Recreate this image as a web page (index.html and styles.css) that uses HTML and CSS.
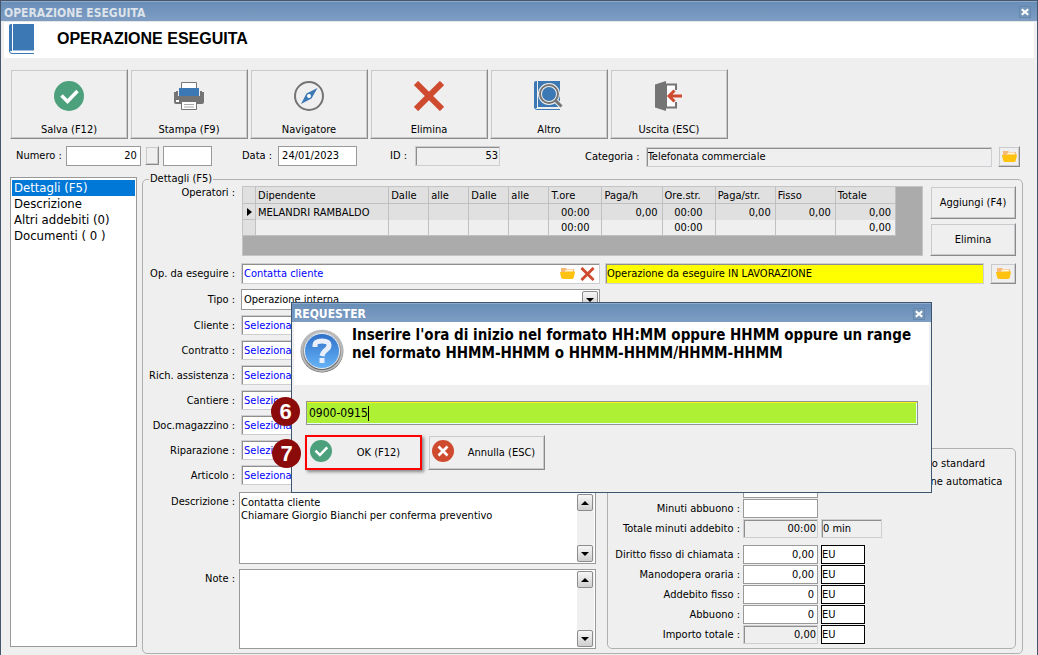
FILE: index.html
```html
<!DOCTYPE html>
<html lang="it">
<head>
<meta charset="utf-8">
<title>Operazione eseguita</title>
<link rel="stylesheet" href="styles.css">
</head>
<body>
<svg class="defs" aria-hidden="true">
  <defs>
    <linearGradient id="ring" x1="0" y1="0" x2="0" y2="1"><stop offset="0" stop-color="#d8d8d8"/><stop offset="1" stop-color="#5c5c5c"/></linearGradient>
    <linearGradient id="ball" x1="0" y1="0" x2="0" y2="1"><stop offset="0" stop-color="#2f70c8"/><stop offset="1" stop-color="#67b4f8"/></linearGradient>
  </defs>
  <symbol id="i-book" viewBox="0 0 26 30"><path fill="#3c78b4" d="M3 0h22v26H4V0zM2 0h1v27H0V2q0-2 2-2z"/><path fill="none" stroke="#3c78b4" d="M.5 2v25q0 2.500 2.500 2.500h22"/><path stroke="#9fbfdf" d="M4 26.500h21"/></symbol>
  <symbol id="i-ok" viewBox="0 0 30 30"><circle cx="15" cy="15" r="15" fill="#4ca07c"/><path fill="none" stroke="#fff" stroke-width="3.500" d="M7.500 14.500l6 6L23.500 10"/></symbol>
  <symbol id="i-print" viewBox="0 0 30 28"><path fill="#747474" d="M0 10h3v3h24v-3h3v10q0 2-2 2H2q-2 0-2-2zM2 9h26v6H2z"/><path fill="#efefef" d="M4 6h22v8H4z"/><path fill="#fff" stroke="#777" d="M7.500.5h15V7h-15z"/><path fill="#3c78b4" d="M5 6h20v8H5z"/><path fill="#fff" d="M2 18h3v2H2z"/><path fill="#fff" stroke="#747474" d="M7.500 19.500h15v8h-15z"/><path stroke="#aaa" d="M10 22.500h10M10 25h10"/></symbol>
  <symbol id="i-nav" viewBox="0 0 30 30"><circle cx="15" cy="15" r="14" fill="none" stroke="#747474" stroke-width="2"/><path fill="#3c78b4" d="M23.500 7l-6 10.500L7 23l5.500-10.500z"/><circle cx="15" cy="15" r="2" fill="#fff"/></symbol>
  <symbol id="i-x" viewBox="0 0 30 30"><path fill="none" stroke="#cf4b30" stroke-width="6" d="M2 2l26 26M28 2L2 28"/></symbol>
  <symbol id="i-find" viewBox="0 0 30 30"><path fill="#3c78b4" d="M4 0h22v26H4zM2 0h1v27H0V2q0-2 2-2z"/><path fill="none" stroke="#3c78b4" d="M.5 2v24q0 2.500 2.500 2.500h23"/><path stroke="#efefef" stroke-width="5" d="M20 18l8 8"/><circle cx="15" cy="13" r="9" fill="#3c78b4" stroke="#efefef" stroke-width="4"/><circle cx="15" cy="13" r="9" fill="none" stroke="#747474" stroke-width="2"/><path stroke="#747474" stroke-width="3" d="M21.500 19.500l6 6"/></symbol>
  <symbol id="i-exit" viewBox="0 0 28 30"><path fill="#fff" stroke="#747474" stroke-width="2" d="M11 3.500h10v23H11z"/><path fill="#747474" d="M0 3.500L11 0v30L0 26.500z"/><path fill="#efefef" d="M19 9h4v12h-4z"/><path fill="none" stroke="#cf4b30" stroke-width="3" d="M14 15h13M19.500 9.500L14 15l5.500 5.500"/></symbol>
  <symbol id="i-folder" viewBox="0 0 15 11"><path fill="#f7b978" d="M1 0h5l1 1h7v5H1z"/><path fill="#fff3d8" d="M6 1.500h7V4H5z"/><path fill="#ffc20e" d="M0 4h5l1-.5h9l-1 5.500q-.4 2-2 2H3q-1.600 0-2-2z"/></symbol>
  <symbol id="i-cancel" viewBox="0 0 22 22"><circle cx="11" cy="11" r="11" fill="#cf4b30"/><path stroke="#fff" stroke-width="2.600" d="M6.500 6.500l9 9M15.500 6.500l-9 9"/></symbol>
  <symbol id="i-close" viewBox="0 0 10 10"><path stroke="#fff" stroke-width="2.600" d="M1 1.500l8 7M9 1.500l-8 7"/></symbol>
  <symbol id="i-up" viewBox="0 0 8 4"><path d="M0 4l4-4 4 4z"/></symbol>
  <symbol id="i-down" viewBox="0 0 8 4"><path d="M0 0l4 4 4-4z"/></symbol>
</svg>

<main class="window">
  <div class="titlebar"><span>OPERAZIONE ESEGUITA</span><button class="close" type="button" aria-label="Chiudi finestra"><svg><use href="#i-close"/></svg></button></div>
  <header class="heading"><svg class="book"><use href="#i-book"/></svg><h1>OPERAZIONE ESEGUITA</h1></header>

  <nav class="toolbar">
    <button class="btn tool" type="button"><svg><use href="#i-ok"/></svg>Salva (F12)</button>
    <button class="btn tool" type="button"><svg><use href="#i-print"/></svg>Stampa (F9)</button>
    <button class="btn tool" type="button"><svg><use href="#i-nav"/></svg>Navigatore</button>
    <button class="btn tool" type="button"><svg><use href="#i-x"/></svg>Elimina</button>
    <button class="btn tool" type="button"><svg><use href="#i-find"/></svg>Altro</button>
    <button class="btn tool" type="button"><svg><use href="#i-exit"/></svg>Uscita (ESC)</button>
  </nav>

  <div class="keys">
    <div class="key key-number"><label for="numero">Numero :</label><input class="box num" id="numero" value="20"><button class="btn mini" type="button" aria-label="Cerca numero"></button><input class="box suffix" aria-label="Suffisso numero"></div>
    <div class="key key-date"><label for="data">Data :</label><input class="box date" id="data" value="24/01/2023"></div>
    <div class="key key-id"><label for="ident">ID :</label><input class="box sunken num" id="ident" value="53" readonly></div>
    <div class="key key-category"><label for="categoria">Categoria :</label><input class="box sunken" id="categoria" value="Telefonata commerciale" readonly><button class="btn folder" type="button" aria-label="Scegli categoria"><svg><use href="#i-folder"/></svg></button></div>
  </div>

  <div class="content">
    <ul class="sections">
      <li><a class="current" href="#dettagli">Dettagli (F5)</a></li>
      <li><a href="#descrizione">Descrizione</a></li>
      <li><a href="#addebiti">Altri addebiti (0)</a></li>
      <li><a href="#documenti">Documenti ( 0 )</a></li>
    </ul>

    <fieldset class="details" id="dettagli">
      <legend>Dettagli (F5)</legend>
      <div class="operators">
        <span class="label">Operatori :</span>
        <div class="grid-area">
          <table class="grid">
            <colgroup><col class="c-mark"><col class="c-name"><col class="c-time"><col class="c-time"><col class="c-time"><col class="c-time"><col class="c-mid"><col class="c-wide"><col class="c-mid"><col class="c-wide"><col class="c-wide"><col class="c-wide"></colgroup>
            <thead><tr><th></th><th>Dipendente</th><th>Dalle</th><th>alle</th><th>Dalle</th><th>alle</th><th>T.ore</th><th>Paga/h</th><th>Ore.str.</th><th>Paga/str.</th><th>Fisso</th><th>Totale</th></tr></thead>
            <tbody>
              <tr class="active"><th><span class="marker"></span></th><td class="name">MELANDRI RAMBALDO</td><td></td><td></td><td></td><td></td><td class="hours">00:00</td><td>0,00</td><td class="hours">00:00</td><td>0,00</td><td>0,00</td><td>0,00</td></tr>
              <tr><th></th><td></td><td></td><td></td><td></td><td></td><td class="hours">00:00</td><td></td><td class="hours">00:00</td><td></td><td></td><td>0,00</td></tr>
            </tbody>
          </table>
        </div>
        <div class="side">
          <button class="btn" type="button">Aggiungi (F4)</button>
          <button class="btn" type="button">Elimina</button>
        </div>
      </div>

      <div class="columns">
        <div class="form">
          <div class="row tall"><label for="op">Op. da eseguire :</label><div class="box sunken white lookup"><input id="op" value="Contatta cliente"><button type="button" aria-label="Apri operazione"><svg><use href="#i-folder"/></svg></button><button type="button" aria-label="Togli operazione"><svg class="remove"><use href="#i-x"/></svg></button></div></div>
          <div class="row tall"><label for="tipo">Tipo :</label><div class="box combo"><select id="tipo"><option>Operazione interna</option></select><span class="arrow"><svg><use href="#i-down"/></svg></span></div></div>
          <div class="row"><label for="cliente">Cliente :</label><input class="box sunken white link" id="cliente" value="Seleziona..."></div>
          <div class="row"><label for="contratto">Contratto :</label><input class="box sunken white link" id="contratto" value="Seleziona..."></div>
          <div class="row"><label for="rich">Rich. assistenza :</label><input class="box sunken white link" id="rich" value="Seleziona..."></div>
          <div class="row"><label for="cantiere">Cantiere :</label><input class="box sunken white link" id="cantiere" value="Seleziona..."></div>
          <div class="row"><label for="docmag">Doc.magazzino :</label><input class="box sunken white link" id="docmag" value="Seleziona..."></div>
          <div class="row"><label for="ripar">Riparazione :</label><input class="box sunken white link" id="ripar" value="Seleziona..."></div>
          <div class="row"><label for="articolo">Articolo :</label><input class="box sunken white link" id="articolo" value="Seleziona..."></div>
          <div class="row memo first"><label for="descrizione">Descrizione :</label><div class="box memo-box"><textarea id="descrizione">Contatta cliente
Chiamare Giorgio Bianchi per conferma preventivo</textarea><div class="scroll"><button class="arrow" type="button" aria-label="Descrizione su"><svg><use href="#i-up"/></svg></button><button class="arrow" type="button" aria-label="Descrizione giù"><svg><use href="#i-down"/></svg></button></div></div></div>
          <div class="row memo notes"><label for="note">Note :</label><div class="box memo-box"><textarea id="note"></textarea><div class="scroll"><button class="arrow" type="button" aria-label="Note su"><svg><use href="#i-up"/></svg></button><button class="arrow" type="button" aria-label="Note giù"><svg><use href="#i-down"/></svg></button></div></div></div>
        </div>

        <div class="right">
          <div class="status"><input class="box sunken working" aria-label="Stato operazione" value="Operazione da eseguire IN LAVORAZIONE" readonly><button class="btn folder" type="button" aria-label="Scegli stato"><svg><use href="#i-folder"/></svg></button></div>
          <section class="totals">
            <div class="amounts">
              <label for="minuti">Minuti :</label><input class="box num" id="minuti"><span></span>
              <label for="abbmin">Minuti abbuono :</label><input class="box num" id="abbmin"><span></span>
              <label for="totmin">Totale minuti addebito :</label><input class="box sunken num" id="totmin" value="00:00" readonly><input class="box sunken" aria-label="Minuti" value="0 min" readonly>
              <div class="break"></div>
              <label for="diritto">Diritto fisso di chiamata :</label><input class="box num" id="diritto" value="0,00"><input class="box unit" aria-label="Valuta diritto" value="EU">
              <label for="mano">Manodopera oraria :</label><input class="box num" id="mano" value="0,00"><input class="box unit" aria-label="Valuta manodopera" value="EU">
              <label for="addeb">Addebito fisso :</label><input class="box num" id="addeb" value="0"><input class="box unit" aria-label="Valuta addebito" value="EU">
              <label for="abbuono">Abbuono :</label><input class="box num" id="abbuono" value="0"><input class="box unit" aria-label="Valuta abbuono" value="EU">
              <label for="importo">Importo totale :</label><input class="box sunken num" id="importo" value="0,00" readonly><input class="box unit" aria-label="Valuta importo" value="EU">
            </div>
            <div class="checks">
              <label><input type="checkbox">Importo standard</label>
              <label><input type="checkbox">Gestione automatica</label>
            </div>
          </section>
        </div>
      </div>
    </fieldset>
  </div>
</main>

<div class="dialog" role="dialog" aria-labelledby="dlg-title">
  <div class="titlebar"><span id="dlg-title">REQUESTER</span><button class="close" type="button" aria-label="Chiudi richiesta"><svg><use href="#i-close"/></svg></button></div>
  <div class="question">
    <svg viewBox="0 0 44 44"><circle cx="22" cy="22" r="21.500" fill="url(#ring)"/><circle cx="22" cy="22" r="20" fill="none" stroke="#b8b8b8" stroke-width="2"/><circle cx="22" cy="22" r="17.500" fill="url(#ball)" stroke="#e8eef6"/><path fill="none" stroke="#eaf0fb" stroke-width="5" d="M15 18v-2q0-4 7-4t7 4q0 3-3 5t-4 6"/><path fill="#eaf0fb" d="M19.500 29h5v5h-5z"/></svg>
    <label for="ora">Inserire l'ora di inizio nel formato HH:MM oppure HHMM oppure un range nel formato HHMM-HHMM o HHMM-HHMM/HHMM-HHMM</label>
  </div>
  <div class="answer">
    <div class="entry"><input id="ora" value="0900-0915"><span class="caret"></span></div>
    <div class="actions">
      <button class="btn action marked" type="button"><svg><use href="#i-ok"/></svg><span>OK (F12)</span></button>
      <button class="btn action" type="button"><svg><use href="#i-cancel"/></svg><span>Annulla (ESC)</span></button>
    </div>
  </div>
  <span class="badge badge-input">6</span>
  <span class="badge badge-ok">7</span>
</div>
</body>
</html>
```
FILE: styles.css
```css
* { box-sizing: border-box; }
body, input, select, textarea, button {
  margin: 0;
  font: 11px/13px "DejaVu Sans Condensed", "DejaVu Sans", sans-serif;
  color: #000;
}
body { background: #efefef; }
input, select, textarea { min-width: 0; padding: 0; border: 0; background: transparent; outline: none; }
button { padding: 0; border: 0; background: transparent; }
svg { display: block; flex: none; }
.defs { position: absolute; width: 0; height: 0; }
label, .label { white-space: nowrap; }

.window {
  display: flex;
  flex-direction: column;
  min-height: 100vh;
  background: #efefef;
  border: 1px solid #46566c;
  border-bottom: 0;
}
.titlebar {
  display: flex;
  align-items: center;
  justify-content: space-between;
  height: 20px;
  padding: 3px 6px 0 3px;
  background: linear-gradient(#688eb8, #7e9dc3);
  border-top: 1px solid #8fabc9;
  color: #dde3ea;
  font-size: 12px;
  font-weight: bold;
}
.close { display: flex; align-items: center; justify-content: center; width: 12px; height: 12px; margin-bottom: 2px; background: #7797ba; border: 1px solid #6487ae; }
.close svg { width: 8px; height: 8px; }
.heading { display: flex; align-items: center; gap: 22px; height: 37px; margin: 0 3px; padding: 0 5px 3px; background: #fff; border-top: 1px solid #e6e6e6; }
.heading .book { width: 26px; height: 30px; }
h1 { margin: 0; font: bold 16px/18px "Liberation Sans", Arial, sans-serif; }

.btn { border: 1px solid #efefef; border-right-color: #8a8a8a; border-bottom-color: #8a8a8a; box-shadow: inset 0 0 0 1px #cacace; background: #efefef; }
.toolbar { display: flex; gap: 2px; padding: 11px 9px 0; }
.tool { display: flex; flex-direction: column; align-items: center; justify-content: space-between; width: 118px; height: 70px; padding: 11px 1px 2px; }
.tool svg { width: 30px; height: 30px; }

.box { height: 20px; border: 1px solid #999; background: #fff; padding: 0 3px; }
.sunken { background: #efefef; border: 1px solid #cdcdd2; box-shadow: inset 1px 1px #8e8e8e; padding: 0 1px; }
.white { background: #fff; padding: 0 2px; }
.num { text-align: right; }
.link, .lookup input { color: #00f; }
.keys { display: flex; align-items: flex-start; padding: 6px 17px 0 15px; }
.key { display: flex; align-items: center; gap: 6px; height: 21px; }
.key-number { width: 226px; gap: 4px; }
.key-number .num { width: 75px; }
.mini { width: 14px; height: 19px; }
.suffix { width: 49px; }
.key-date { width: 148px; }
.date { width: 79px; }
.key-id { width: 195px; gap: 8px; }
.key-id input { width: 85px; }
.key-category { flex: 1; padding-top: 2px; }
.key-category input { flex: 1; }
.folder { display: flex; align-items: center; justify-content: center; width: 22px; height: 21px; }
.folder svg { width: 15px; height: 11px; }

.content { display: flex; flex: 1; gap: 5px; padding: 6px 14px 1px 9px; }
.sections { flex: none; width: 127px; margin: 5px 0 7px; padding: 2px 1px; border: 1px solid #999; background: #fff; list-style: none; font-size: 13px; line-height: 16px; }
.sections a { display: block; padding: 0 2px; color: #000; text-decoration: none; white-space: nowrap; }
.sections .current { background: #0078d7; color: #fff; }

.details { flex: 1; min-width: 0; margin: 0; padding: 0 6px 3px 5px; border: 1px solid #b0b0b0; border-radius: 5px; }
.details legend { margin-left: 1px; padding: 0 1px; line-height: 14px; }
.operators { display: flex; gap: 7px; height: 70px; }
.label, .form label { flex: none; width: 87px; text-align: right; }
.grid-area { flex: 1; min-width: 0; border: 1px solid #c4c4c4; background: #ababab; overflow: hidden; }
.side { display: flex; flex-direction: column; gap: 4px; width: 86px; }
.side .btn { height: 33px; }
.grid { border-collapse: separate; border-spacing: 0; table-layout: fixed; width: 653px; }
.grid th, .grid td { height: 16px; padding: 1px 4px 0 2px; border-right: 1px solid #c0c0c0; background: #efefef; font-weight: normal; line-height: 14px; text-align: right; white-space: nowrap; }
.grid thead th { height: 17px; }
.grid thead th, .grid tbody th { text-align: left; border-bottom: 1px solid #c0c0c0; background: #e0e0e0; }
.grid .active td { background: #e0e0e0; }
.grid .active .name { text-align: left; }
.grid .hours { padding-right: 12px; }
.grid tbody tr:last-child td { border-bottom: 1px solid #c0c0c0; }
.marker { display: block; margin-left: 2px; width: 0; border: 4px solid transparent; border-left: 5px solid #000; border-right: 0; }
.c-mark { width: 13px; } .c-name { width: 133px; } .c-time { width: 40px; } .c-mid { width: 53px; } .c-wide { width: 60px; }

.columns { display: grid; grid-template-columns: minmax(0, 452fr) minmax(0, 411fr); gap: 5px; padding-top: 7px; }
.form { display: flex; flex-direction: column; gap: 5px; }
.row { display: flex; align-items: center; gap: 6px; height: 20px; }
.row > .box { flex: 1; }
.tall { height: 21px; }
.tall .box { height: 21px; }
.lookup, .combo { display: flex; align-items: center; }
.lookup { gap: 5px; padding-right: 4px; }
.lookup input, .combo select { flex: 1; }
.lookup button svg { width: 15px; height: 11px; }
.lookup button .remove { width: 15px; height: 14px; }
.combo { padding: 0 1px 0 2px; }
.combo select { appearance: none; }
.arrow { display: flex; align-items: center; justify-content: center; width: 16px; height: 17px; border: 1px solid #8c8c8c; border-radius: 2px; background: linear-gradient(#f6f6f6, #cfcfcf); }
.arrow svg { width: 8px; height: 4px; }
.memo { align-items: flex-start; height: 72px; gap: 4px; padding-right: 4px; }
.memo label { padding-top: 3px; }
.first { margin-top: 2px; }
.notes { height: 80px; }
.memo-box { display: flex; height: 100%; padding: 1px; }
.memo-box textarea { flex: 1; resize: none; padding: 2px 0; overflow: hidden; white-space: pre; }
.scroll { display: flex; flex-direction: column; justify-content: space-between; width: 17px; background: #efefef; }

.right { display: flex; flex-direction: column; justify-content: space-between; }
.status { display: flex; gap: 6px; height: 21px; }
.status input { flex: 1; height: 21px; background: #ff0; }
.status .folder { width: 26px; }
.totals { display: flex; justify-content: space-between; height: 201px; margin: 0 0 0 2px; padding: 6px 4px 4px; border: 1px solid #b0b0b0; border-radius: 5px; }
.amounts { display: grid; grid-template-columns: 128px 75px 61px; align-content: end; align-items: center; gap: 1px 3px; }
.amounts label { text-align: right; }
.amounts .box { width: 100%; height: 19px; }
.amounts .unit { width: 44px; border-color: #000; padding: 0; }
.break { grid-column: 1 / -1; height: 5px; }
.checks { display: flex; flex-direction: column; gap: 4px; padding: 1px 14px 0 0; }
.checks label { display: flex; align-items: center; gap: 4px; height: 14px; }
.checks input { width: 13px; height: 13px; margin: 0; }

.dialog { position: absolute; left: 291px; top: 302px; width: 641px; background: #efefef; border: 1px solid #3e5570; }
.dialog .titlebar { height: 19px; padding-top: 3px; padding-left: 2px; color: #fff; }
.question { display: flex; gap: 8px; height: 63px; margin: 0 2px; padding: 4px 6px; background: #fff; }
.question svg { width: 44px; height: 44px; margin-top: 3px; }
.question label { white-space: normal; font-size: 15px; line-height: 18px; font-weight: bold; }
.answer { padding: 16px 13px 22px 14px; }
.entry { display: flex; align-items: center; height: 24px; padding: 0 2px; background: #adf034; border: 1px solid #929292; box-shadow: inset 0 1px #f5f51e, inset -1px -1px #e8ffff; }
.entry input { field-sizing: content; height: 18px; font-size: 12px; }
.caret { width: 1px; height: 15px; background: #000; }
.actions { display: flex; gap: 6px; margin-left: -1px; padding-top: 10px; }
.action { display: flex; align-items: center; width: 117px; height: 35px; padding: 0 3px; }
.action svg { width: 22px; height: 22px; margin-bottom: 3px; }
.action span { flex: 1; padding-left: 8px; text-align: center; }
.marked { border: 2px solid #f00; box-shadow: 2px 2px 3px #888; }
.badge { position: absolute; display: flex; align-items: center; justify-content: center; width: 29px; height: 29px; border-radius: 50%; background: #8b0a0a; color: #fff; font: bold 22px/22px "Liberation Sans", Arial, sans-serif; }
.badge-input { left: -21px; top: 94px; }
.badge-ok { left: -20px; top: 136px; }
```
